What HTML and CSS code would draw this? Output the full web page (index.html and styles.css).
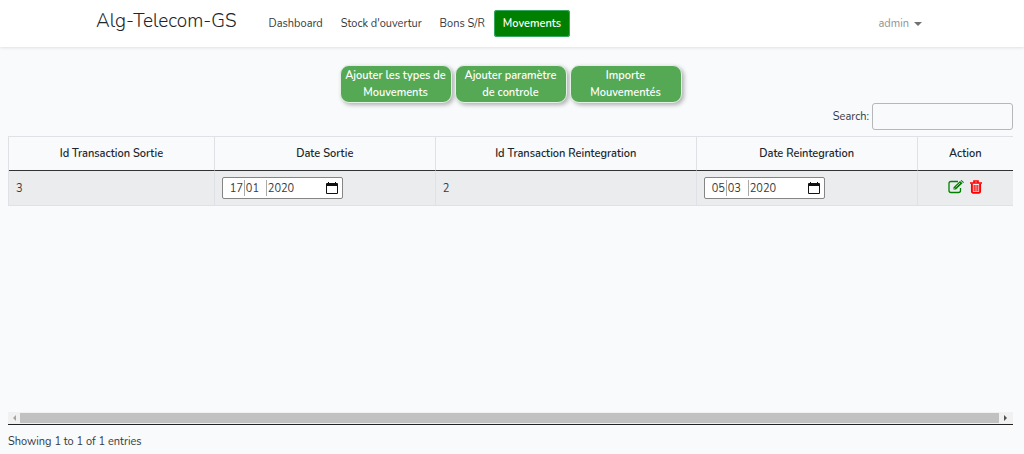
FILE: index.html
```html
<!DOCTYPE html>
<html lang="fr">

<head>
    <meta charset="UTF-8">
    <meta name="viewport" content="width=device-width, initial-scale=1.0">
    <title>Alg-Telecom-GS</title>
    <link rel="stylesheet" href="styles.css">
</head>

<body>
    <header class="navbar">
        <div class="container">
            <a class="brand" href="#">Alg-Telecom-GS</a>
            <nav class="nav">
                <a class="nav-link" href="#">Dashboard</a>
                <a class="nav-link" href="#">Stock d'ouvertur</a>
                <a class="nav-link" href="#">Bons S/R</a>
                <a class="nav-link active" href="#">Movements</a>
            </nav>
            <button class="user-menu" type="button">admin <span class="caret"></span></button>
        </div>
    </header>

    <main class="content">
        <div class="actions">
            <button class="btn-action" type="button">Ajouter les types de Mouvements</button>
            <button class="btn-action" type="button">Ajouter paramètre de controle</button>
            <button class="btn-action" type="button">Importe Mouvementés</button>
        </div>

        <div class="filter">
            <label for="search">Search:</label>
            <input class="search" id="search" type="search">
        </div>

        <div class="table-scroll">
            <table class="movements">
                <colgroup>
                    <col class="col-sortie">
                    <col class="col-date">
                    <col class="col-reintegration">
                    <col class="col-date">
                    <col class="col-action">
                </colgroup>
                <thead>
                    <tr>
                        <th>Id Transaction Sortie</th>
                        <th>Date Sortie</th>
                        <th>Id Transaction Reintegration</th>
                        <th>Date Reintegration</th>
                        <th>Action</th>
                    </tr>
                </thead>
                <tbody>
                    <tr>
                        <td>3</td>
                        <td>
                            <div class="date-field" role="group" aria-label="Date Sortie">
                                <input class="day" type="text" value="17" aria-label="Jour">
                                <input class="month" type="text" value="01" aria-label="Mois">
                                <input class="year" type="text" value="2020" aria-label="Année">
                                <button class="icon-btn" type="button" aria-label="Calendrier">
                                    <svg width="12" height="12" viewBox="0 0 12 12"><path fill="#111" fill-rule="evenodd" d="M2 0h1v1h6V0h1v1h1q1 0 1 1v9q0 1-1 1H1q-1 0-1-1V2q0-1 1-1h1zM1 4v7h10V4z"/></svg>
                                </button>
                            </div>
                        </td>
                        <td>2</td>
                        <td>
                            <div class="date-field" role="group" aria-label="Date Reintegration">
                                <input class="day" type="text" value="05" aria-label="Jour">
                                <input class="month" type="text" value="03" aria-label="Mois">
                                <input class="year" type="text" value="2020" aria-label="Année">
                                <button class="icon-btn" type="button" aria-label="Calendrier">
                                    <svg width="12" height="12" viewBox="0 0 12 12"><path fill="#111" fill-rule="evenodd" d="M2 0h1v1h6V0h1v1h1q1 0 1 1v9q0 1-1 1H1q-1 0-1-1V2q0-1 1-1h1zM1 4v7h10V4z"/></svg>
                                </button>
                            </div>
                        </td>
                        <td>
                            <div class="row-actions">
                                <button class="icon-btn edit" type="button" aria-label="Modifier">
                                    <svg width="16" height="14" viewBox="0 0 16 14" fill="none" stroke="currentColor">
                                        <path d="M10 1.5H3Q1 1.5 1 3.5v7q0 2 2 2h7.500q2 0 2-2V8" stroke-width="1.300"/>
                                        <path d="M5.500 9.500V7.300L12 1l2.500 2.300L8 9.500z" fill="currentColor" stroke="none"/>
                                        <path d="M12.600.5l.8-.5L16 2.200l-.8.8z" fill="currentColor" stroke="none"/>
                                        <path d="M7.500 7.300L12 3" stroke="#ebecee" stroke-width=".7"/>
                                        <path d="M6.300 8.900V7.900l1 1z" fill="#ebecee" stroke="none"/>
                                    </svg>
                                </button>
                                <button class="icon-btn delete" type="button" aria-label="Supprimer">
                                    <svg width="12" height="14" viewBox="0 0 12 14" fill="none" stroke="currentColor">
                                        <path d="M0 3h12M4 2.500V1h4v1.500" stroke-width="1.600"/>
                                        <path d="M1.900 3.500V11q0 1.800 1.300 1.800h5.600q1.300 0 1.300-1.800V3.500" stroke-width="1.900"/>
                                        <path d="M4.200 5v6M6 5v6M7.800 5v6" stroke-width="1.100"/>
                                    </svg>
                                </button>
                            </div>
                        </td>
                    </tr>
                </tbody>
            </table>
            <div class="scrollbar" aria-hidden="true">
                <span class="arrow arrow-left"></span>
                <span class="thumb"></span>
                <span class="arrow arrow-right"></span>
            </div>
        </div>

        <div class="info">Showing 1 to 1 of 1 entries</div>
    </main>
</body>

</html>
```

FILE: styles.css
```css
* {
    box-sizing: border-box;
}

body {
    margin: 0;
    min-height: 100vh;
    display: flex;
    flex-direction: column;
    background-color: #f8fafc;
    color: #35393d;
    font-family: Nunito, Lato, sans-serif;
    font-size: 11px;
    line-height: 17px;
}

button,
input {
    font: inherit;
    color: inherit;
}

button {
    cursor: pointer;
}

a {
    color: inherit;
    text-decoration: none;
}

/* top bar */
.navbar {
    background-color: #fff;
    box-shadow: 0 1px 3px rgba(0, 0, 0, 0.1);
}

.container {
    max-width: 832px;
    height: 47px;
    margin: 0 auto;
    display: flex;
    align-items: center;
}

.brand {
    margin-right: 23px;
    padding-bottom: 6px;
    color: #212529;
    font-size: 19px;
    font-weight: 300;
    line-height: 24px;
}

.nav {
    display: flex;
}

.nav-link {
    padding: 5px 9px;
}

.nav-link.active {
    border-radius: 3px;
    background-color: green;
    box-shadow: inset 0 0 0 1px #38a860;
    color: #fff;
    font-weight: 600;
}

.user-menu {
    display: flex;
    align-items: center;
    gap: 5px;
    margin-left: auto;
    padding: 0 6px;
    border: none;
    background: none;
    color: #909294;
}

.caret {
    border: 4px solid transparent;
    border-top-color: #707070;
    border-bottom: none;
}

.content {
    flex: 1;
    display: flex;
    flex-direction: column;
    padding: 18px 11px 4px 8px;
}

.actions {
    display: flex;
    justify-content: center;
    gap: 3px;
}

.btn-action {
    width: 112px;
    padding: 1px 3px;
    border: 1px solid #e4f0e5;
    border-radius: 9px;
    background-color: #55a955;
    box-shadow: 2px 2px 4px rgba(0, 0, 0, 0.3);
    color: #fff;
    font-weight: 600;
}

.filter {
    display: flex;
    justify-content: flex-end;
    align-items: center;
    gap: 3px;
    margin-bottom: 6px;
}

.search {
    width: 141px;
    height: 27px;
    padding: 4px;
    border: 1px solid #b5b7b9;
    border-radius: 3px;
    background-color: transparent;
}

/* table */
.table-scroll {
    flex: 1;
    display: flex;
    flex-direction: column;
    border-bottom: 1px solid #222;
}

.movements {
    width: 100%;
    table-layout: fixed;
    border-spacing: 0;
    border-top: 1px solid #dee2e6;
    border-left: 1px solid #dee2e6;
}

.col-sortie {
    width: 20.5%;
}

.col-date {
    width: 22%;
}

.col-reintegration {
    width: 26%;
}

.movements th {
    height: 34px;
    padding: 0 8px;
    border-right: 1px solid #dee2e6;
    border-bottom: 1px solid #333;
    color: #212529;
    font-weight: 600;
}

.movements td {
    height: 35px;
    padding: 0 7px;
    border-right: 1px solid #dee2e6;
    border-bottom: 1px solid #dee2e6;
    background-color: #ebecee;
}

.movements th:last-child,
.movements td:last-child {
    border-right: none;
}

.date-field {
    display: flex;
    align-items: center;
    width: 121px;
    height: 22px;
    padding: 0 4px 0 6px;
    border: 1px solid #858585;
    border-radius: 2px;
    background-color: #fff;
}

.date-field input {
    height: 16px;
    padding: 0 1px;
    border: none;
    background: none;
}

.date-field .day {
    width: 16px;
    border-right: 1px solid #aaa;
}

.date-field .month {
    width: 22px;
    border-right: 1px solid #aaa;
}

.date-field .year {
    width: 34px;
}

.icon-btn {
    display: flex;
    padding: 0;
    border: none;
    background: none;
}

.date-field .icon-btn {
    margin-left: auto;
}

.row-actions {
    display: flex;
    justify-content: center;
    gap: 6px;
    padding-bottom: 3px;
}

.edit {
    color: green;
}

.delete {
    color: red;
}

/* horizontal scrollbar */
.scrollbar {
    display: flex;
    align-items: center;
    height: 12px;
    margin-top: auto;
    background-color: #f1f1f1;
}

.thumb {
    flex: 1;
    height: 10px;
    background-color: #c1c1c1;
}

.arrow {
    width: 4px;
    margin: 0 5px;
    border: 3px solid transparent;
}

.arrow-left {
    margin: 0 4px;
    border-left: none;
    border-right-color: #a3a3a3;
}

.arrow-right {
    border-right: none;
    border-left-color: #505050;
}

.info {
    padding-top: 8px;
}
```
